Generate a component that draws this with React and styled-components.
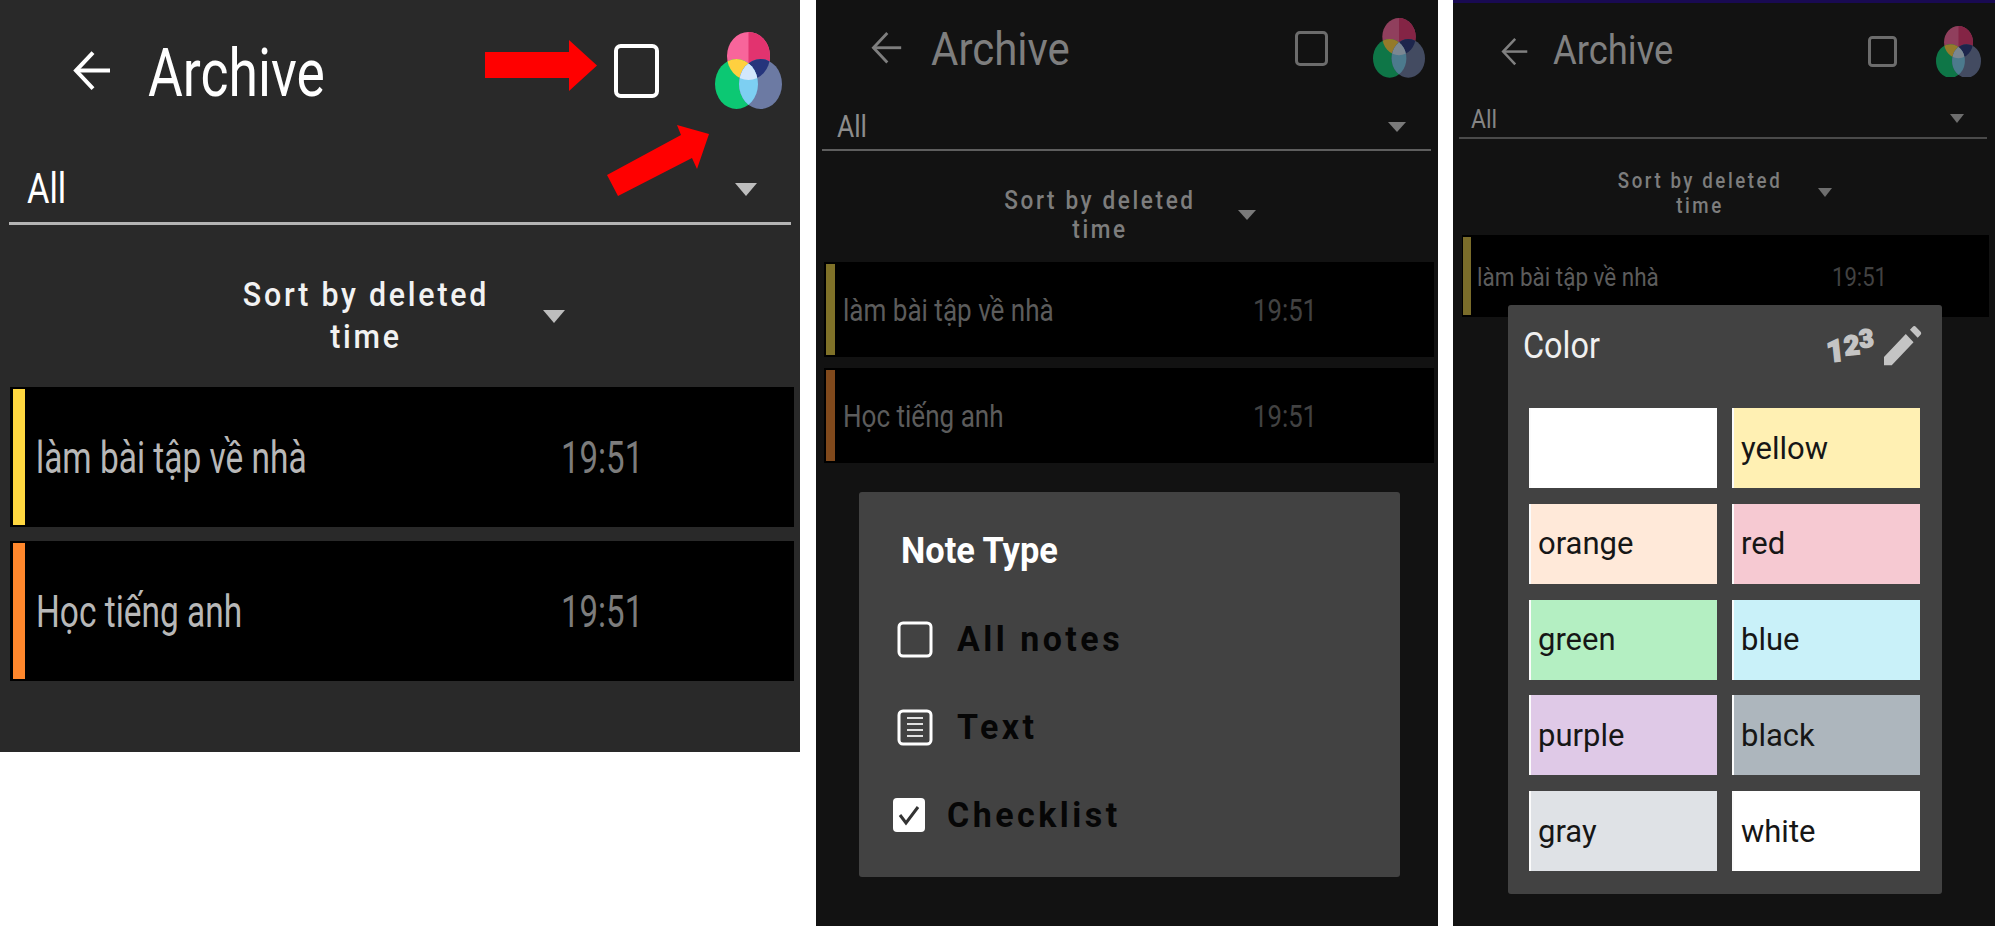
import React from 'react';
import styled, { createGlobalStyle } from 'styled-components';

const GlobalStyle = createGlobalStyle`
  html, body { margin: 0; padding: 0; background: #fff; }
  body { font-family: Roboto, "Noto Sans", sans-serif; }
`;

const Page = styled.div`
  display: flex;
  align-items: flex-start;
  width: 1995px;
  height: 926px;
  overflow: hidden;
`;

const Panel = styled.section`
  position: relative;
  flex: none;
  width: ${p => p.$m.w}px;
  height: ${p => p.$m.h}px;
  margin-left: ${p => p.$m.gap}px;
  background: ${p => p.$m.bg};
`;

const TopBand = styled.div`
  height: 3px;
  background: #190a52;
`;

const Header = styled.header`
  display: grid;
  grid-template-columns: ${p => p.$m.titleX - p.$m.arrowX}px ${p => p.$m.squareX - p.$m.titleX}px ${p => p.$m.colorX - p.$m.squareX}px ${p => p.$m.colorW}px;
  align-items: center;
  height: ${p => p.$m.headerH}px;
  padding-left: ${p => p.$m.arrowX}px;
`;

// the source screenshot is squeezed horizontally, so text gets a scaleX
const Squeezed = styled.span`
  display: block;
  white-space: nowrap;
  transform: scaleX(${p => p.$sx});
  transform-origin: left center;
`;

const Title = styled(Squeezed)`
  margin-top: ${p => p.$m.titleDy}px;
  font-size: ${p => p.$m.titleSize}px;
  line-height: 1.1;
  color: ${p => p.$m.titleColor};
`;

const BackIcon = styled.svg`
  display: block;
  width: ${p => p.$m.arrowW}px;
  height: ${p => p.$m.arrowW * 1.08}px;
  color: ${p => p.$m.titleColor};
`;

const SquareIcon = styled.div`
  box-sizing: border-box;
  width: ${p => p.$m.squareW}px;
  height: ${p => p.$m.squareH}px;
  border: ${p => p.$m.squareB}px solid ${p => p.$m.squareColor};
  border-radius: ${p => p.$m.squareW * 0.15}px;
`;

const ColorSvg = styled.svg`
  display: block;
  width: ${p => p.$m.colorW}px;
  height: ${p => p.$m.colorW * 1.15}px;
  opacity: ${p => p.$m.colorOpacity};
`;

const Filter = styled.div`
  box-sizing: border-box;
  display: flex;
  align-items: center;
  justify-content: space-between;
  height: ${p => p.$m.filterH}px;
  width: ${p => p.$m.filterW}px;
  margin-left: ${p => p.$m.filterX}px;
  padding: ${p => p.$m.filterPad}px ${p => p.$m.caretR}px 0 ${p => p.$m.allX}px;
  border-bottom: ${p => p.$m.lineH}px solid ${p => p.$m.lineColor};
`;

const AllLabel = styled(Squeezed)`
  font-size: ${p => p.$m.allSize}px;
  line-height: 1;
  color: ${p => p.$m.allColor};
`;

const Caret = styled.i`
  display: block;
  flex: none;
  width: 0;
  height: 0;
  border-left: ${p => p.$w / 2}px solid transparent;
  border-right: ${p => p.$w / 2}px solid transparent;
  border-top: ${p => p.$w * 0.6}px solid ${p => p.$c};
`;

const SortRow = styled.div`
  box-sizing: border-box;
  display: flex;
  align-items: center;
  height: ${p => p.$m.sortH}px;
  padding: ${p => p.$m.sortPad}px 0 0 ${p => p.$m.sortX}px;
`;

const SortLabel = styled.div`
  flex: none;
  width: ${p => p.$m.sortW}px;
  margin-right: ${p => p.$m.sortGap}px;
  text-align: center;
  font-size: ${p => p.$m.sortSize}px;
  font-weight: 500;
  letter-spacing: ${p => p.$m.sortLs}px;
  line-height: ${p => p.$m.sortLh}px;
  color: ${p => p.$m.sortColor};
  transform: scaleX(${p => p.$m.sortSx});
`;

const Cards = styled.div`
  display: flex;
  flex-direction: column;
  gap: ${p => p.$m.cardGap}px;
  width: ${p => p.$m.cardW}px;
  margin-left: ${p => p.$m.cardX}px;
`;

const Card = styled.article`
  box-sizing: border-box;
  display: flex;
  align-items: center;
  height: ${p => p.$m.cardH}px;
  padding: 2px 0 2px ${p => p.$m.barX}px;
  background: #000;
`;

const ColorBar = styled.div`
  flex: none;
  align-self: stretch;
  width: ${p => p.$m.barW}px;
  background: ${p => p.$c};
`;

const NoteTitle = styled(Squeezed)`
  flex: none;
  width: ${p => p.$m.noteW}px;
  margin-left: ${p => p.$m.noteX}px;
  padding-top: 2px;
  font-size: ${p => p.$m.noteSize}px;
  color: ${p => p.$m.noteColor};
`;

const NoteTime = styled(Squeezed)`
  padding-top: 2px;
  font-size: ${p => p.$m.noteSize}px;
  color: ${p => p.$m.timeColor};
`;

const Pointer = styled.svg`
  position: absolute;
  left: ${p => p.$x}px;
  top: ${p => p.$y}px;
  width: ${p => p.$w}px;
  height: ${p => p.$h}px;
`;

const Dialog = styled.div`
  position: absolute;
  box-sizing: border-box;
  left: ${p => p.$x}px;
  top: ${p => p.$y}px;
  width: ${p => p.$w}px;
  height: ${p => p.$h}px;
  padding-top: ${p => p.$pt}px;
  background: #424242;
  border-radius: 3px;
`;

const DialogHeading = styled.h2`
  margin: 0;
  height: 88px;
  padding-left: 42px;
  font-size: 37px;
  font-weight: 700;
  line-height: 88px;
  color: #fff;
  transform: scaleX(.93);
  transform-origin: 42px center;
`;

const Option = styled.div`
  display: flex;
  align-items: center;
  height: 88px;
  padding-left: ${p => p.$pad}px;
`;

const OptionIcon = styled.svg`
  display: block;
  flex: none;
  width: ${p => p.$w}px;
  height: ${p => p.$h}px;
  margin-right: ${p => p.$mr}px;
`;

const OptionLabel = styled(Squeezed)`
  font-size: 35px;
  font-weight: 700;
  letter-spacing: 3.6px;
  color: #060606;
`;

const ColorHead = styled.div`
  display: flex;
  align-items: center;
  height: 82px;
  padding: 0 20px 0 15px;
`;

const ColorTitle = styled(Squeezed)`
  flex: 1;
  font-size: 36px;
  color: #f0f0f0;
`;

const Digits = styled.div`
  display: flex;
  align-items: flex-end;
  width: 48px;
  height: 38px;
  margin-right: 10px;
  color: #c4c4c4;
  font-weight: 900;
  transform: rotate(-6deg);
`;

const Digit = styled.span`
  font-size: ${p => p.$s}px;
  line-height: 1;
  margin-bottom: ${p => p.$b}px;
  -webkit-text-stroke: 1.5px #c4c4c4;
`;

const PencilSvg = styled.svg`
  display: block;
  flex: none;
  width: 38px;
  height: 40px;
`;

const Swatches = styled.div`
  display: grid;
  grid-template-columns: 188px 188px;
  grid-auto-rows: 80px;
  column-gap: 15px;
  row-gap: 15.75px;
  padding: 21px 0 0 21px;
`;

const Swatch = styled.div`
  box-sizing: border-box;
  display: flex;
  align-items: center;
  padding-left: 7px;
  background: ${p => p.$c};
  border-left: 2px solid #fbfbfb;
  font-size: 31px;
  color: #161616;
`;

const Arrow = ({ m }) => (
  <BackIcon $m={m} viewBox="0 0 38 41" fill="none" stroke="currentColor" strokeWidth={m.arrowStroke}>
    <path d="M37 20.5H3" />
    <path d="M20 2.5 3 20.5l17 18" />
  </BackIcon>
);

const ColorsIcon = ({ m, id }) => (
  <ColorSvg $m={m} viewBox="0 0 67 77">
    <defs>
      <clipPath id={`${id}a`}><ellipse cx="33.5" cy="24" rx="21.5" ry="24" /></clipPath>
      <clipPath id={`${id}b`}><ellipse cx="21.5" cy="52" rx="21.5" ry="25" /></clipPath>
      <clipPath id={`${id}c`}><ellipse cx="45.5" cy="52" rx="21.5" ry="25" /></clipPath>
    </defs>
    <ellipse cx="33.5" cy="24" rx="21.5" ry="24" fill="#f8659b" />
    <rect x="33.5" width="24" height="50" fill="#e2336f" clipPath={`url(#${id}a)`} />
    <ellipse cx="21.5" cy="52" rx="21.5" ry="25" fill="#0cc873" />
    <ellipse cx="45.5" cy="52" rx="21.5" ry="25" fill="#6c7aa3" />
    <g clipPath={`url(#${id}a)`}>
      <ellipse cx="21.5" cy="52" rx="21.5" ry="25" fill="#ffd03f" />
      <ellipse cx="45.5" cy="52" rx="21.5" ry="25" fill="#26357c" />
    </g>
    <g clipPath={`url(#${id}b)`}>
      <ellipse cx="45.5" cy="52" rx="21.5" ry="25" fill="#7dcff2" />
      <g clipPath={`url(#${id}c)`}>
        <ellipse cx="33.5" cy="24" rx="21.5" ry="24" fill="#d2e7fc" />
      </g>
    </g>
  </ColorSvg>
);

const NoteCard = ({ m, color, children }) => (
  <Card $m={m}>
    <ColorBar $m={m} $c={color} />
    <NoteTitle $m={m} $sx={m.noteSx}>{children}</NoteTitle>
    <NoteTime $m={m} $sx={m.timeSx}>19:51</NoteTime>
  </Card>
);

const ArchiveScreen = ({ m, id, notes }) => (
  <>
    <Header $m={m}>
      <Arrow m={m} />
      <Title $m={m} $sx={m.titleSx}>Archive</Title>
      <SquareIcon $m={m} />
      <ColorsIcon m={m} id={id} />
    </Header>
    <Filter $m={m}>
      <AllLabel $m={m} $sx={m.allSx}>All</AllLabel>
      <Caret $w={m.caretW} $c={m.caretColor} />
    </Filter>
    <SortRow $m={m}>
      <SortLabel $m={m}>Sort by deleted<br />time</SortLabel>
      <Caret $w={m.caretW} $c={m.caretColor} />
    </SortRow>
    <Cards $m={m}>
      {notes.map(n => <NoteCard key={n.text} m={m} color={n.color}>{n.text}</NoteCard>)}
    </Cards>
  </>
);

const first = {
  w: 800, h: 752, gap: 0, bg: '#292929',
  headerH: 142, arrowX: 73, arrowW: 38, arrowStroke: 4, titleX: 148, squareX: 614, colorX: 715, colorW: 67,
  titleSize: 66, titleDy: 6, titleSx: 0.81, titleColor: '#fff',
  squareW: 45, squareH: 54, squareB: 4.5, squareColor: '#fff', colorOpacity: 1,
  filterH: 83, filterW: 782, filterX: 9, filterPad: 14, caretR: 34, allX: 18, lineH: 3, lineColor: '#b4b4b4',
  allSize: 42, allSx: 0.82, allColor: '#fff', caretW: 22, caretColor: '#bdbdbd',
  sortH: 162, sortPad: 20, sortX: 216, sortW: 300, sortGap: 27, sortSize: 33, sortLs: 3, sortLh: 42, sortSx: 0.92, sortColor: '#f2f2f2',
  cardW: 784, cardX: 10, cardH: 140, cardGap: 14, barX: 3, barW: 12, noteX: 11, noteW: 525, noteSize: 44, noteSx: 0.76, timeSx: 0.75,
  noteColor: '#b8b8b8', timeColor: '#7c7c7c',
};

const second = {
  w: 622, h: 926, gap: 16, bg: '#121212',
  headerH: 96, arrowX: 55, arrowW: 31, arrowStroke: 3.5, titleX: 115, squareX: 479, colorX: 557, colorW: 52,
  titleSize: 47, titleDy: 2, titleSx: 0.893, titleColor: '#7e7e7e',
  squareW: 33, squareH: 35, squareB: 3, squareColor: '#6c6c6c', colorOpacity: 0.55,
  filterH: 55, filterW: 609, filterX: 6, filterPad: 8, caretR: 25, allX: 15, lineH: 2, lineColor: '#5e5e5e',
  allSize: 31, allSx: 0.85, allColor: '#8c8c8c', caretW: 18, caretColor: '#7a7a7a',
  sortH: 111, sortPad: 16, sortX: 154, sortW: 260, sortGap: 8, sortSize: 26, sortLs: 3, sortLh: 29, sortSx: 0.868, sortColor: '#7d7d7d',
  cardW: 610, cardX: 8, cardH: 95, cardGap: 11, barX: 2, barW: 9, noteX: 8, noteW: 410, noteSize: 31, noteSx: 0.84, timeSx: 0.83,
  noteColor: '#5c5c5c', timeColor: '#424242',
};

const third = {
  w: 542, h: 926, gap: 15, bg: '#121212',
  headerH: 97, arrowX: 48, arrowW: 27, arrowStroke: 3.5, titleX: 100, squareX: 415, colorX: 483, colorW: 45,
  titleSize: 41, titleDy: -2, titleSx: 0.888, titleColor: '#808080',
  squareW: 29, squareH: 31, squareB: 3, squareColor: '#6c6c6c', colorOpacity: 0.55,
  filterH: 39, filterW: 528, filterX: 6, filterPad: 0, caretR: 23, allX: 12, lineH: 2, lineColor: '#4a4a4a',
  allSize: 26, allSx: 0.88, allColor: '#858585', caretW: 15, caretColor: '#6e6e6e',
  sortH: 96, sortPad: 11, sortX: 137, sortW: 220, sortGap: 8, sortSize: 22, sortLs: 3, sortLh: 25, sortSx: 0.85, sortColor: '#7d7d7d',
  cardW: 527, cardX: 9, cardH: 82, cardGap: 10, barX: 1, barW: 8, noteX: 6, noteW: 355, noteSize: 26, noteSx: 0.864, timeSx: 0.85,
  noteColor: '#5c5c5c', timeColor: '#424242',
};

const homework = 'làm bài tập về nhà';
const english = 'Học tiếng anh';

const swatches = [
  ['#ffffff', ''], ['#fff0b3', 'yellow'],
  ['#ffe9d9', 'orange'], ['#f6c9d2', 'red'],
  ['#b4efc2', 'green'], ['#c9f1f9', 'blue'],
  ['#dfc9e7', 'purple'], ['#adb6bd', 'black'],
  ['#dfe2e6', 'gray'], ['#ffffff', 'white'],
];

export default function App() {
  return (
    <Page>
      <GlobalStyle />
      <Panel $m={first}>
        <ArchiveScreen m={first} id="p1" notes={[{ text: homework, color: '#ffd740' }, { text: english, color: '#ff872c' }]} />
        <Pointer $x={485} $y={40} $w={112} $h={51} viewBox="0 0 112 51">
          <path d="M0 12H84V0l28 25.5-28 25.5V38H0z" fill="#ff0000" />
        </Pointer>
        <Pointer $x={600} $y={122} $w={112} $h={76} viewBox="0 0 112 76">
          <path d="M7 53 81 13 77 3l32 9-12 35-5-11-74 38z" fill="#ff0000" />
        </Pointer>
      </Panel>

      <Panel $m={second}>
        <ArchiveScreen m={second} id="p2" notes={[{ text: homework, color: '#7f7128' }, { text: english, color: '#80491c' }]} />
        <Dialog $x={43} $y={492} $w={541} $h={385} $pt={15}>
          <DialogHeading>Note Type</DialogHeading>
          <Option $pad={38}>
            <OptionIcon $w={36} $h={37} $mr={24} viewBox="0 0 36 37">
              <rect x="2" y="2" width="32" height="33" rx="4" fill="none" stroke="#fff" strokeWidth="3" />
            </OptionIcon>
            <OptionLabel $sx={0.97}>All notes</OptionLabel>
          </Option>
          <Option $pad={38}>
            <OptionIcon $w={36} $h={37} $mr={24} viewBox="0 0 36 37">
              <rect x="2" y="2" width="32" height="33" rx="4" fill="none" stroke="#fff" strokeWidth="3" />
              <path d="M10 9h16M10 15h16M10 21h16M10 27h16" stroke="#e0e0e0" strokeWidth="2" />
            </OptionIcon>
            <OptionLabel $sx={0.97}>Text</OptionLabel>
          </Option>
          <Option $pad={34}>
            <OptionIcon $w={32} $h={34} $mr={22} viewBox="0 0 32 34">
              <rect width="32" height="34" rx="4" fill="#fff" />
              <path d="M7 17l6 8L25 9" fill="none" stroke="#333" strokeWidth="3" />
            </OptionIcon>
            <OptionLabel $sx={0.97}>Checklist</OptionLabel>
          </Option>
        </Dialog>
      </Panel>

      <Panel $m={third}>
        <TopBand />
        <ArchiveScreen m={third} id="p3" notes={[{ text: homework, color: '#7a6c2a' }]} />
        <Dialog $x={55} $y={305} $w={434} $h={589} $pt={0}>
          <ColorHead>
            <ColorTitle $sx={0.9}>Color</ColorTitle>
            <Digits>
              <Digit $s={31} $b={0}>1</Digit>
              <Digit $s={27} $b={5}>2</Digit>
              <Digit $s={25} $b={12}>3</Digit>
            </Digits>
            <PencilSvg viewBox="3 3 18.4 18.4" preserveAspectRatio="none">
              <path d="M3 17.25V21h3.75L17.3 10.45l-3.75-3.75L3 17.25zM20.71 7.04c.39-.39.39-1.02 0-1.41l-2.34-2.34c-.39-.39-1.02-.39-1.41 0l-1.4 1.4 3.75 3.75 1.4-1.4z" fill="#c4c4c4" />
            </PencilSvg>
          </ColorHead>
          <Swatches>
            {swatches.map(([c, label]) => <Swatch key={c + label} $c={c}>{label}</Swatch>)}
          </Swatches>
        </Dialog>
      </Panel>
    </Page>
  );
}
